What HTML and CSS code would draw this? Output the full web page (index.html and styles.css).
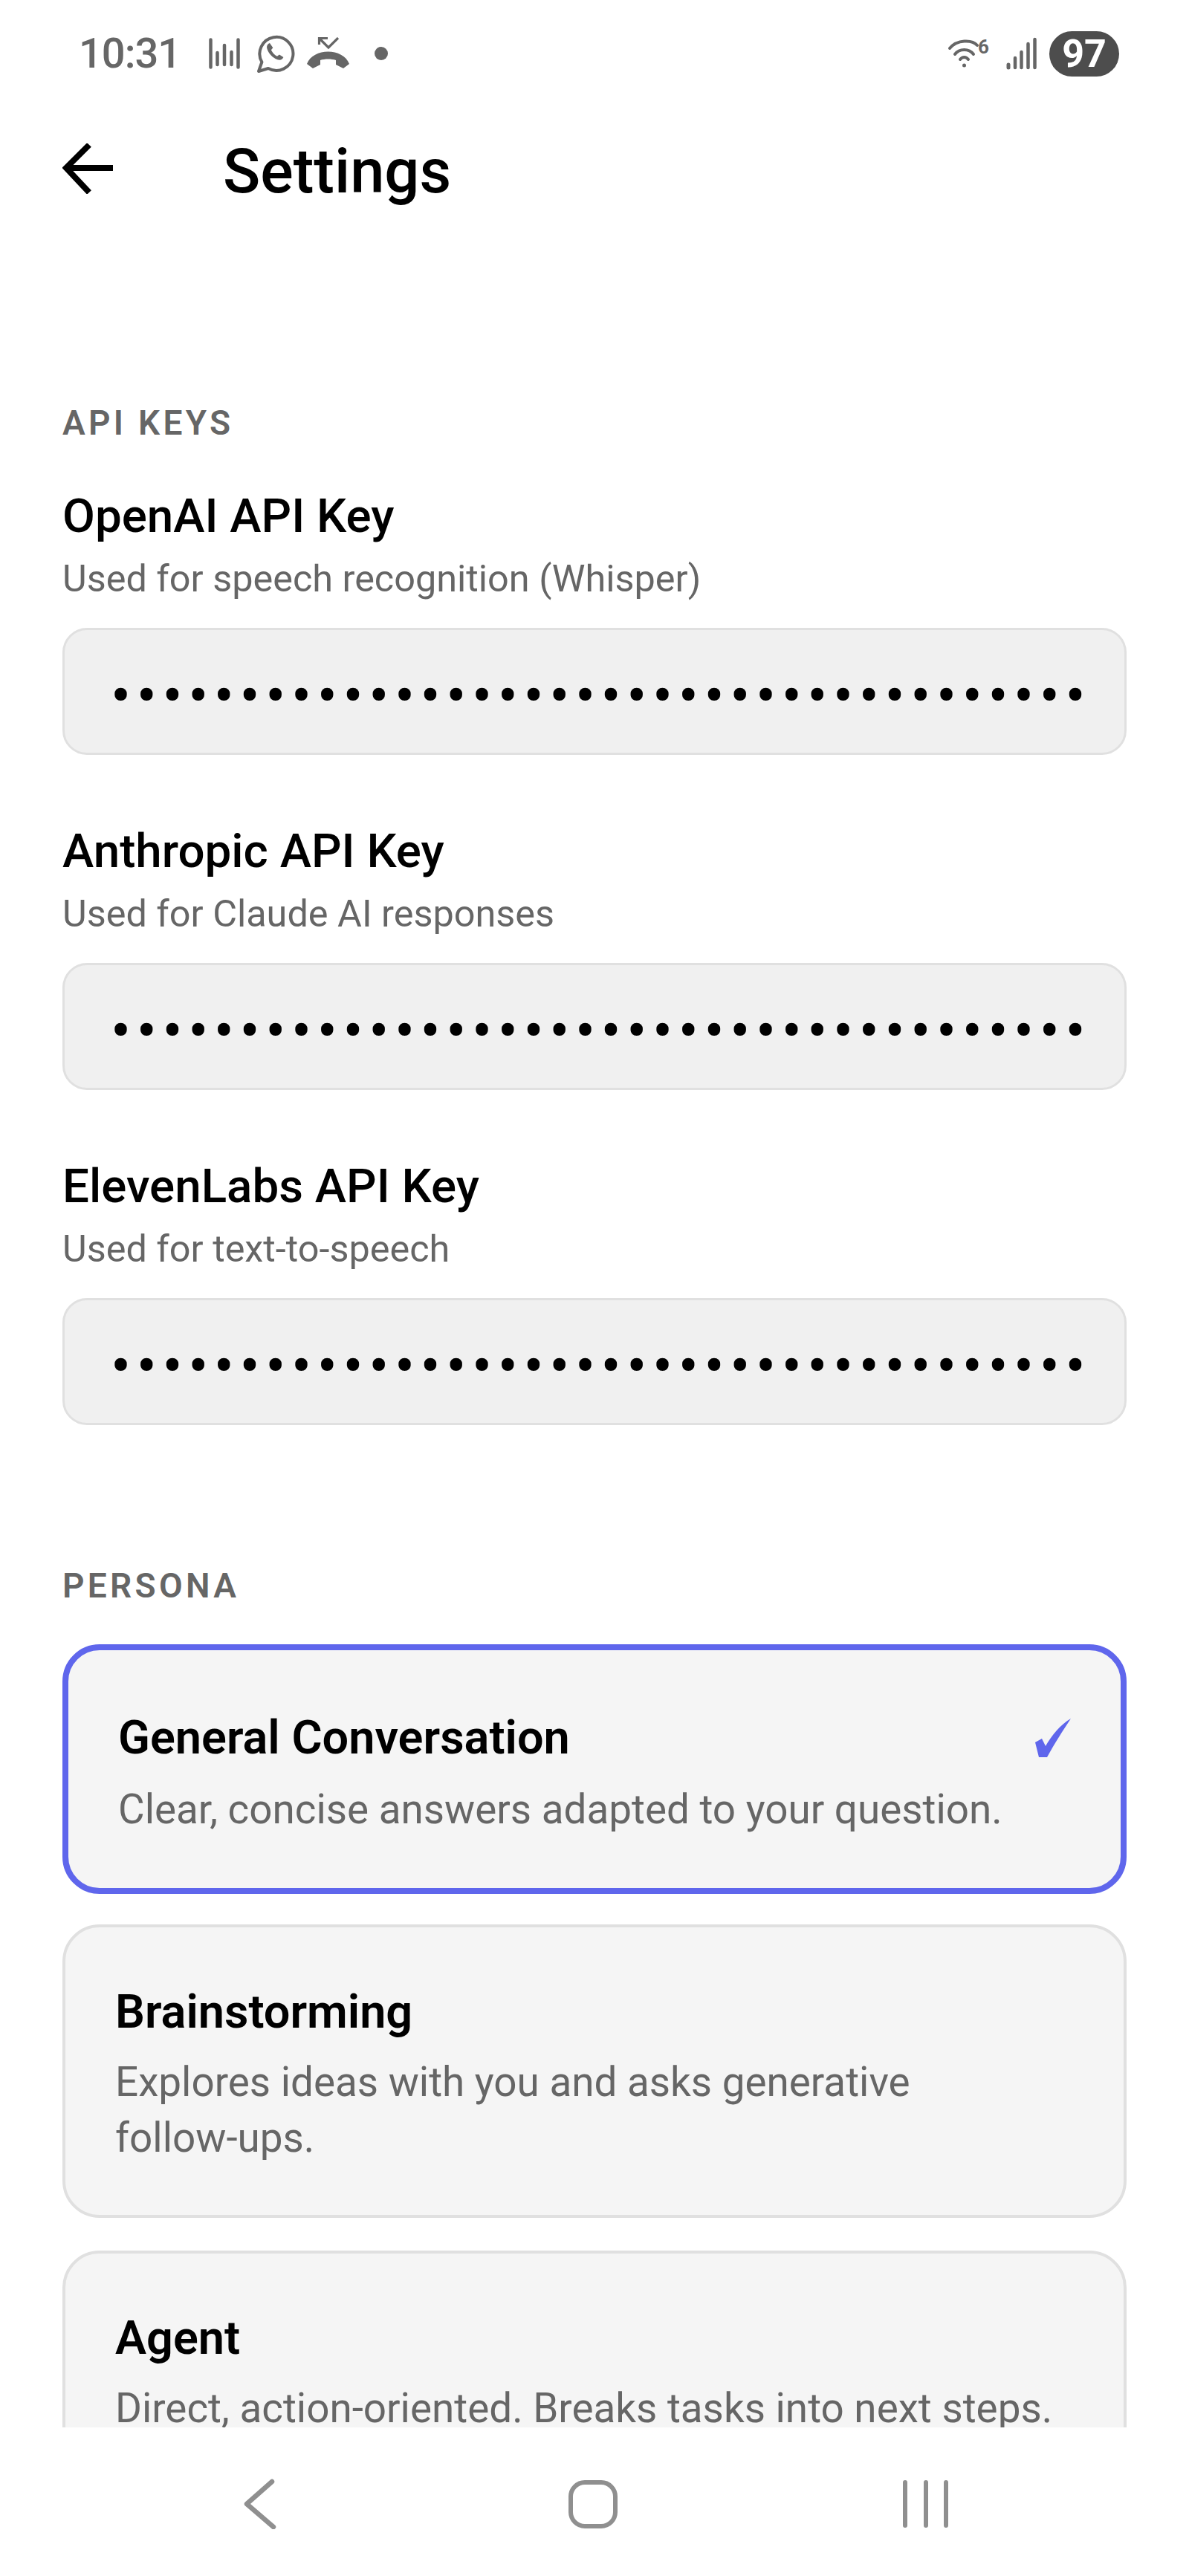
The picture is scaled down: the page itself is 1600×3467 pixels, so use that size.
FILE: index.html
```html
<!DOCTYPE html>
<html>
<head>
  <meta charset="UTF-8">
  <title>Settings</title>
  <meta name="viewport" content="width=device-width, initial-scale=1">
  <link rel="stylesheet" href="styles.css">
</head>
<body>

  <div class="status-bar">
    <div class="status-left">
      <span class="time">10:31</span>
      <svg class="icon-bars" width="42" height="42" viewBox="0 0 42 42" fill="none" stroke="#666" stroke-width="4.500" stroke-linecap="round">
        <path d="M2.500 2.500V39.500M11.500 20V36M21 10V36M30.500 19V36M39.500 2.500V39.500"/>
      </svg>
      <svg class="icon-whatsapp" width="52" height="54" viewBox="0 0 52 54" fill="none">
        <path d="M3 51l4.400-12.500A22.500 22.500 0 1 1 16 47z" stroke="#666" stroke-width="4" stroke-linejoin="round"/>
        <path d="M18 13c-3 1-4.500 4-3.600 7.500 1.600 6 7.500 12.500 14 14.800 3.600 1.200 6.800 0 8-3.300l-5.500-3.500-3 2.300c-3.300-1.500-6.500-5-8-8.500l2.400-3z" fill="#666"/>
      </svg>
      <svg class="icon-call" width="58" height="44" viewBox="0 0 58 44" fill="none">
        <path d="M28 1.500H16.500V10M16.500 1.500L29 14 42 1" stroke="#666" stroke-width="3.200"/>
        <path d="M0 36C8 14 49 14 57 36L49 42 39 37V31C33 29 24 29 18 31V37L8 42z" fill="#666"/>
      </svg>
      <span class="status-dot"></span>
    </div>
    <div class="status-right">
      <svg class="icon-wifi" width="56" height="40" viewBox="0 0 56 40" fill="none" stroke="#666" stroke-width="4" stroke-linecap="round">
        <path d="M2 13C12 1 32 1 39 9M9 21C15 13 28 13 34 21M16 28C19 24 24 24 27 28"/>
        <circle cx="21.500" cy="36" r="2.500" fill="#666" stroke="none"/>
        <text class="wifi-six" x="40" y="20">6</text>
      </svg>
      <svg class="icon-signal" width="42" height="44" viewBox="0 0 42 44" fill="none" stroke="#666" stroke-linecap="round">
        <path d="M3 37V41" stroke-width="5"/>
        <path d="M12 28V41M20.500 20V41M29.500 9V41M38.500 3V41" stroke-width="4.500"/>
      </svg>
      <span class="battery">97</span>
    </div>
  </div>

  <div class="header">
    <svg class="back-arrow" width="68" height="68" viewBox="0 0 68 68" fill="none" stroke="#000" stroke-width="8">
      <path d="M68 33H6"/>
      <path d="M36 2L5 33l31 33" stroke-linejoin="miter"/>
    </svg>
    <h1>Settings</h1>
  </div>

  <div class="content">
    <h2 class="section-title">API KEYS</h2>

    <div class="field">
      <div class="field-label">OpenAI API Key</div>
      <div class="field-hint">Used for speech recognition (Whisper)</div>
      <div class="key-input"><div class="key-clip"><span class="key-dots">••••••••••••••••••••••••••••••••••••••</span></div></div>
    </div>

    <div class="field">
      <div class="field-label">Anthropic API Key</div>
      <div class="field-hint">Used for Claude AI responses</div>
      <div class="key-input"><div class="key-clip"><span class="key-dots">••••••••••••••••••••••••••••••••••••••</span></div></div>
    </div>

    <div class="field">
      <div class="field-label">ElevenLabs API Key</div>
      <div class="field-hint">Used for text-to-speech</div>
      <div class="key-input"><div class="key-clip"><span class="key-dots">••••••••••••••••••••••••••••••••••••••</span></div></div>
    </div>

    <h2 class="section-title persona-title">PERSONA</h2>

    <div class="persona-card selected">
      <div class="persona-head">
        <div class="persona-name">General Conversation</div>
        <svg class="check" width="48" height="52" viewBox="0 0 48 52">
          <path d="M0 32L9 27 14 37C22 23 34 8 48 0 38 15 27 32 16 52H5z" fill="#5f66ec"/>
        </svg>
      </div>
      <div class="persona-desc">Clear, concise answers adapted to your question.</div>
    </div>

    <div class="persona-card">
      <div class="persona-name">Brainstorming</div>
      <div class="persona-desc">Explores ideas with you and asks generative <span class="nowrap">follow-ups.</span></div>
    </div>

    <div class="persona-card">
      <div class="persona-name">Agent</div>
      <div class="persona-desc">Direct, action-oriented. Breaks tasks into next steps.</div>
    </div>
  </div>

  <div class="nav-bar">
    <div class="nav-slot">
      <svg width="44" height="68" viewBox="0 0 44 68" fill="none" stroke="#8f8f8f" stroke-width="6.500" stroke-linecap="round" stroke-linejoin="round">
        <path d="M38 4L4 34l36 31"/>
      </svg>
    </div>
    <div class="nav-slot">
      <span class="nav-home"></span>
    </div>
    <div class="nav-slot">
      <svg width="62" height="64" viewBox="0 0 62 64" fill="none" stroke="#8f8f8f" stroke-width="6" stroke-linecap="round">
        <path d="M3 3V61M31 3V61M58 3V61"/>
      </svg>
    </div>
  </div>

</body>
</html>
```

FILE: styles.css
```css
* {
  box-sizing: border-box;
}
html, body {
  margin: 0;
  height: 100%;
}
body {
  display: flex;
  flex-direction: column;
  height: 100vh;
  overflow: hidden;
  background: #fff;
  color: #000;
  font-family: Roboto, "Noto Sans", sans-serif;
}

/* status bar */
.status-bar {
  flex: none;
  height: 144px;
  display: flex;
  align-items: center;
  justify-content: space-between;
  padding: 0 94px 0 106px;
}
.status-left,
.status-right {
  display: flex;
  align-items: center;
}
.time {
  font-size: 56px;
  font-weight: 500;
  letter-spacing: -1px;
  color: #666;
  margin-right: 38px;
}
.icon-bars {
  margin-right: 22px;
}
.icon-whatsapp {
  margin-right: 16px;
}
.icon-call {
  margin-right: 33px;
}
.status-dot {
  width: 18px;
  height: 18px;
  border-radius: 50%;
  background: #666;
}
.wifi-six {
  font-family: Roboto, sans-serif;
  font-size: 26px;
  font-weight: 700;
  fill: #666;
  stroke: none;
}
.icon-wifi {
  margin-right: 22px;
  overflow: visible;
}
.icon-signal {
  margin-right: 16px;
}
.battery {
  width: 94px;
  height: 61px;
  border-radius: 31px;
  background: #4d4d4d;
  color: #fff;
  font-size: 52px;
  font-weight: 700;
  line-height: 61px;
  text-align: center;
}

/* header */
.header {
  flex: none;
  height: 166px;
  display: flex;
  align-items: center;
  padding-left: 84px;
}
.back-arrow {
  flex: none;
}
.header h1 {
  margin: 7px 0 0 148px;
  font-size: 83px;
  font-weight: 500;
}

/* scrolling part */
.content {
  flex: 1;
  min-height: 0;
  overflow: hidden;
  padding: 232px 84px 0;
}
.section-title {
  margin: 0;
  font-size: 46px;
  font-weight: 600;
  line-height: 54px;
  letter-spacing: 4.300px;
  color: #666;
}
.persona-title {
  margin-top: 189px;
  margin-bottom: 52px;
}

.field {
  margin-bottom: 94px;
}
.section-title + .field {
  margin-top: 63px;
}
.field:last-of-type {
  margin-bottom: 0;
}
.field-label {
  font-size: 63.700px;
  font-weight: 500;
  line-height: 72px;
}
.field-hint {
  margin-top: 18px;
  margin-bottom: 36px;
  font-size: 50.400px;
  line-height: 60px;
  color: #666;
}
.key-input {
  height: 171px;
  display: flex;
  align-items: center;
  padding: 10px 45px 0 49.500px;
  background: #f0f0f0;
  border: 3px solid #e0e0e0;
  border-radius: 33px;
}
.key-clip {
  flex: 1;
  min-width: 0;
  display: flex;
  justify-content: flex-end;
  overflow: hidden;
}
.key-dots {
  flex: none;
  white-space: nowrap;
  font-size: 82px;
  letter-spacing: 7.050px;
  line-height: 84px;
  color: #000;
}

/* persona cards */
.persona-card {
  margin-bottom: 44px;
  padding: 74px 67px 66px;
  background: #f5f5f5;
  border: 4px solid #e0e0e0;
  border-radius: 50px;
}
.persona-card.selected {
  margin-bottom: 41px;
  padding: 78px 67px 68px;
  border: 8px solid #5f66ec;
}
.selected .persona-desc {
  margin-top: 19px;
}
.persona-head {
  display: flex;
  align-items: center;
  justify-content: space-between;
}
.persona-name {
  font-size: 63px;
  font-weight: 600;
  line-height: 80px;
}
.persona-desc {
  margin-top: 17px;
  font-size: 54.800px;
  line-height: 75px;
  color: #666;
}
.nowrap {
  white-space: nowrap;
}

/* android nav */
.nav-bar {
  flex: none;
  height: 200px;
  background: #fff;
  display: flex;
  justify-content: center;
  padding: 69px 5px 0 0;
}
.nav-slot {
  width: 448px;
  height: 68px;
  display: flex;
  align-items: center;
  justify-content: center;
}
.nav-home {
  width: 66px;
  height: 65px;
  border: 6.500px solid #8f8f8f;
  border-radius: 22px;
}
```
